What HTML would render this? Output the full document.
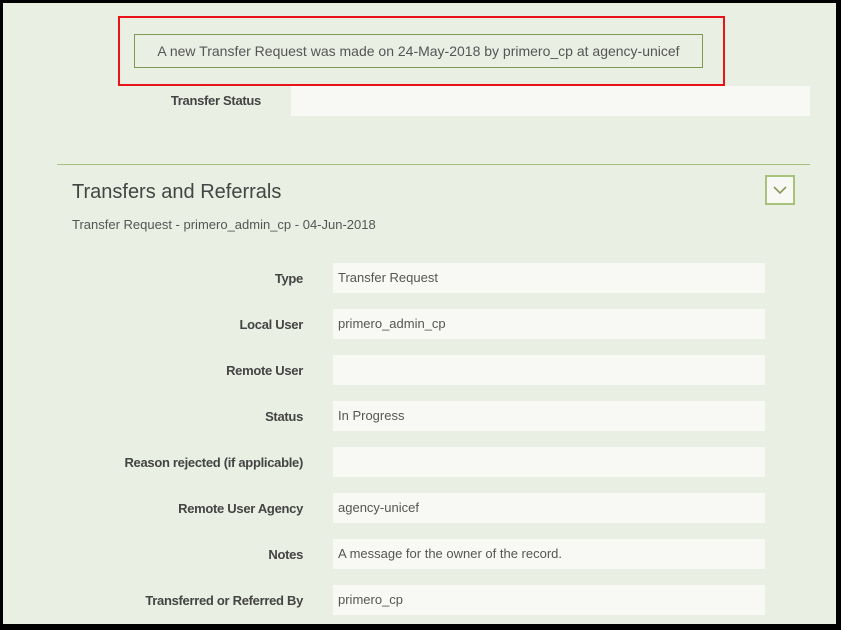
<!DOCTYPE html>
<html><head><style>
body{margin:0;width:841px;height:630px;background:#000;position:relative;overflow:hidden;font-family:"Liberation Sans",sans-serif;}
#c{position:absolute;left:3px;top:3px;width:833px;height:621px;background:#e9efe3;}
.a{position:absolute;}
.lbl{position:absolute;right:538px;width:300px;text-align:right;font-size:13px;font-weight:bold;color:#444;letter-spacing:-0.3px;}
.in{position:absolute;left:333px;width:432px;height:30px;background:#f8f8f4;font-size:13px;color:#555;line-height:30px;box-sizing:border-box;padding-left:5px;}
</style></head><body>
<div id="c"></div>
<div class="a" style="left:118px;top:16px;width:603px;height:66px;border:2px solid #e8141a;"></div>
<div class="a" style="left:134px;top:34px;width:569px;height:34px;border:1px solid #7d9a52;box-sizing:border-box;text-align:center;line-height:32px;font-size:14px;color:#555;">A new Transfer Request was made on 24-May-2018 by primero_cp at agency-unicef</div>
<div class="a" style="left:130px;top:93px;width:131px;text-align:right;font-size:13px;font-weight:bold;color:#444;letter-spacing:-0.3px;">Transfer Status</div>
<div class="a" style="left:291px;top:86px;width:519px;height:30px;background:#f8f8f4;"></div>
<div class="a" style="left:57px;top:164px;width:753px;height:1px;background:#a7c27a;"></div>
<div class="a" style="left:72px;top:181px;font-size:20px;color:#444;">Transfers and Referrals</div>
<div class="a" style="left:72px;top:217px;font-size:13px;color:#555;">Transfer Request - primero_admin_cp - 04-Jun-2018</div>
<div class="a" style="left:765px;top:175px;width:30px;height:30px;border:2px solid #a7c27a;box-sizing:border-box;background:#f8f8f4;">
<svg width="26" height="26" style="position:absolute;left:0;top:0"><path d="M7 10 L13 16 L19 10" fill="none" stroke="#8a9a5a" stroke-width="1.6"/></svg></div>

<div class="lbl" style="top:271px">Type</div><div class="in" style="top:263px">Transfer Request</div>
<div class="lbl" style="top:317px">Local User</div><div class="in" style="top:309px">primero_admin_cp</div>
<div class="lbl" style="top:363px">Remote User</div><div class="in" style="top:355px"></div>
<div class="lbl" style="top:409px">Status</div><div class="in" style="top:401px">In Progress</div>
<div class="lbl" style="top:455px">Reason rejected (if applicable)</div><div class="in" style="top:447px"></div>
<div class="lbl" style="top:501px">Remote User Agency</div><div class="in" style="top:493px">agency-unicef</div>
<div class="lbl" style="top:547px">Notes</div><div class="in" style="top:539px">A message for the owner of the record.</div>
<div class="lbl" style="top:593px">Transferred or Referred By</div><div class="in" style="top:585px">primero_cp</div>
</body></html>
